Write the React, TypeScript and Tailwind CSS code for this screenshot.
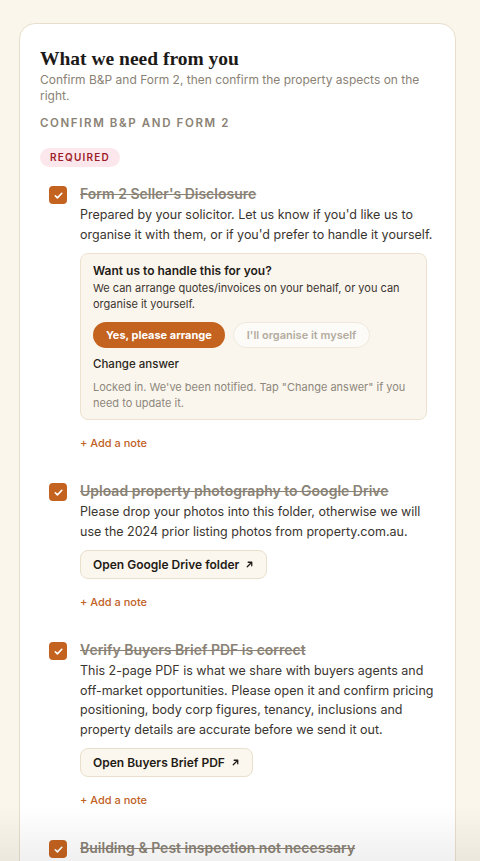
import React from "react";

type Task = {
  id: string;
  title: string;
  body: string;
  link?: string;
};

const tasks: Task[] = [
  {
    id: "drive",
    title: "Upload property photography to Google Drive",
    body: "Please drop your photos into this folder, otherwise we will use the 2024 prior listing photos from property.com.au.",
    link: "Open Google Drive folder",
  },
  {
    id: "brief",
    title: "Verify Buyers Brief PDF is correct",
    body: "This 2-page PDF is what we share with buyers agents and off-market opportunities. Please open it and confirm pricing positioning, body corp figures, tenancy, inclusions and property details are accurate before we send it out.",
    link: "Open Buyers Brief PDF",
  },
];

function Check() {
  return (
    <div className="mt-[1px] flex h-[18px] w-[18px] shrink-0 items-center justify-center rounded-[4px] bg-[#c4621f]">
      <svg width="11" height="11" viewBox="0 0 12 12" fill="none">
        <path d="M2.5 6.3l2.3 2.3L9.6 3.6" stroke="white" strokeWidth="1.8" strokeLinecap="round" strokeLinejoin="round" />
      </svg>
    </div>
  );
}

function AddNote() {
  return <button className="mt-[15px] text-[11px] font-medium text-[#c0611f]">+ Add a note</button>;
}

function Row({ title, children }: { title: string; children: React.ReactNode }) {
  return (
    <div className="flex gap-[13px] pl-[9px]">
      <Check />
      <div className="min-w-0 flex-1">
        <div className="text-[14px] font-semibold leading-[18px] text-[#8a8275] line-through decoration-[#8a8275]">{title}</div>
        {children}
      </div>
    </div>
  );
}

function LinkButton({ label }: { label: string }) {
  return (
    <button className="mt-[9px] flex h-[29px] items-center gap-[6px] rounded-[8px] border border-[#e9e0cc] bg-[#fbf7ee] px-[12px] text-[12px] font-semibold text-[#1f1b16]">
      {label}
      <svg width="9" height="9" viewBox="0 0 10 10" fill="none">
        <path d="M2.5 7.5L7.5 2.5M3.5 2.5h4v4" stroke="#1f1b16" strokeWidth="1.4" strokeLinecap="round" strokeLinejoin="round" />
      </svg>
    </button>
  );
}

export default function App() {
  return (
    <div className="relative h-[861px] overflow-hidden bg-[#faf6ec] pl-[19px] pt-[23px]" style={{ fontFamily: "Inter, 'Noto Sans', sans-serif" }}>
      <section className="w-[437px] rounded-t-[16px] border border-[#e7dfcb] bg-white pb-10 pl-[20px] pr-[20px] pt-[24px]">
        <h2 className="text-[19.5px] font-bold leading-[22px] text-[#1c1a17]" style={{ fontFamily: "'Liberation Serif', 'DejaVu Serif', serif" }}>
          What we need from you
        </h2>
        <p className="mt-[2px] text-[12px] leading-[16px] text-[#8a8275]">
          Confirm B&amp;P and Form 2, then confirm the property aspects on the right.
        </p>
        <h3 className="mt-[11px] text-[11.5px] font-semibold uppercase tracking-[0.14em] text-[#8a8275]">Confirm B&amp;P and Form 2</h3>

        <span className="mt-[16px] inline-block rounded-full bg-[#fce8ec] px-[10px] py-[2px] text-[10px] font-semibold uppercase tracking-[0.12em] text-[#9f1d2a]">
          Required
        </span>

        <div className="mt-[18px] flex flex-col gap-[29px]">
          <div>
            <Row title="Form 2 Seller's Disclosure">
              <p className="mt-[2px] text-[12.5px] leading-[19.5px] text-[#3a352f]">
                Prepared by your solicitor. Let us know if you'd like us to organise it with them, or if you'd prefer to handle it yourself.
              </p>
              <div className="mt-[9px] w-[347px] rounded-[8px] border border-[#ece2cf] bg-[#faf6ee] px-[12px] pb-[8px] pt-[8px]">
                <div className="text-[12px] font-semibold leading-[18px] text-[#1f1b16]">Want us to handle this for you?</div>
                <p className="text-[11px] leading-[16px] text-[#3a352f]">
                  We can arrange quotes/invoices on your behalf, or you can organise it yourself.
                </p>
                <div className="mt-[10px] flex gap-[8px]">
                  <button className="h-[26px] rounded-full bg-[#c4621f] px-[13px] text-[11px] font-bold text-white">Yes, please arrange</button>
                  <button className="h-[26px] rounded-full border border-[#efe8dc] bg-[#fdfbf7] px-[13px] text-[11px] font-semibold text-[#b3aca0]">
                    I'll organise it myself
                  </button>
                </div>
                <div className="mt-[8px] text-[11.5px] font-medium leading-[16px] text-[#2b2620]">Change answer</div>
                <p className="mt-[7px] text-[11px] leading-[16px] text-[#8e877b]">
                  Locked in. We've been notified. Tap "Change answer" if you need to update it.
                </p>
              </div>
              <AddNote />
            </Row>
          </div>

          {tasks.map((t) => (
            <div key={t.id}>
              <Row title={t.title}>
                <p className="mt-[2px] text-[12.5px] leading-[19.5px] text-[#3a352f]">{t.body}</p>
                {t.link && <LinkButton label={t.link} />}
                <div>
                  <AddNote />
                </div>
              </Row>
            </div>
          ))}

          <Row title="Building & Pest inspection not necessary">
            <div className="h-10" />
          </Row>
        </div>
      </section>
      {/* bottom fade */}
      <div className="pointer-events-none absolute inset-x-0 bottom-0 h-[55px] bg-gradient-to-b from-transparent to-[#000]/[0.06]" />
    </div>
  );
}
